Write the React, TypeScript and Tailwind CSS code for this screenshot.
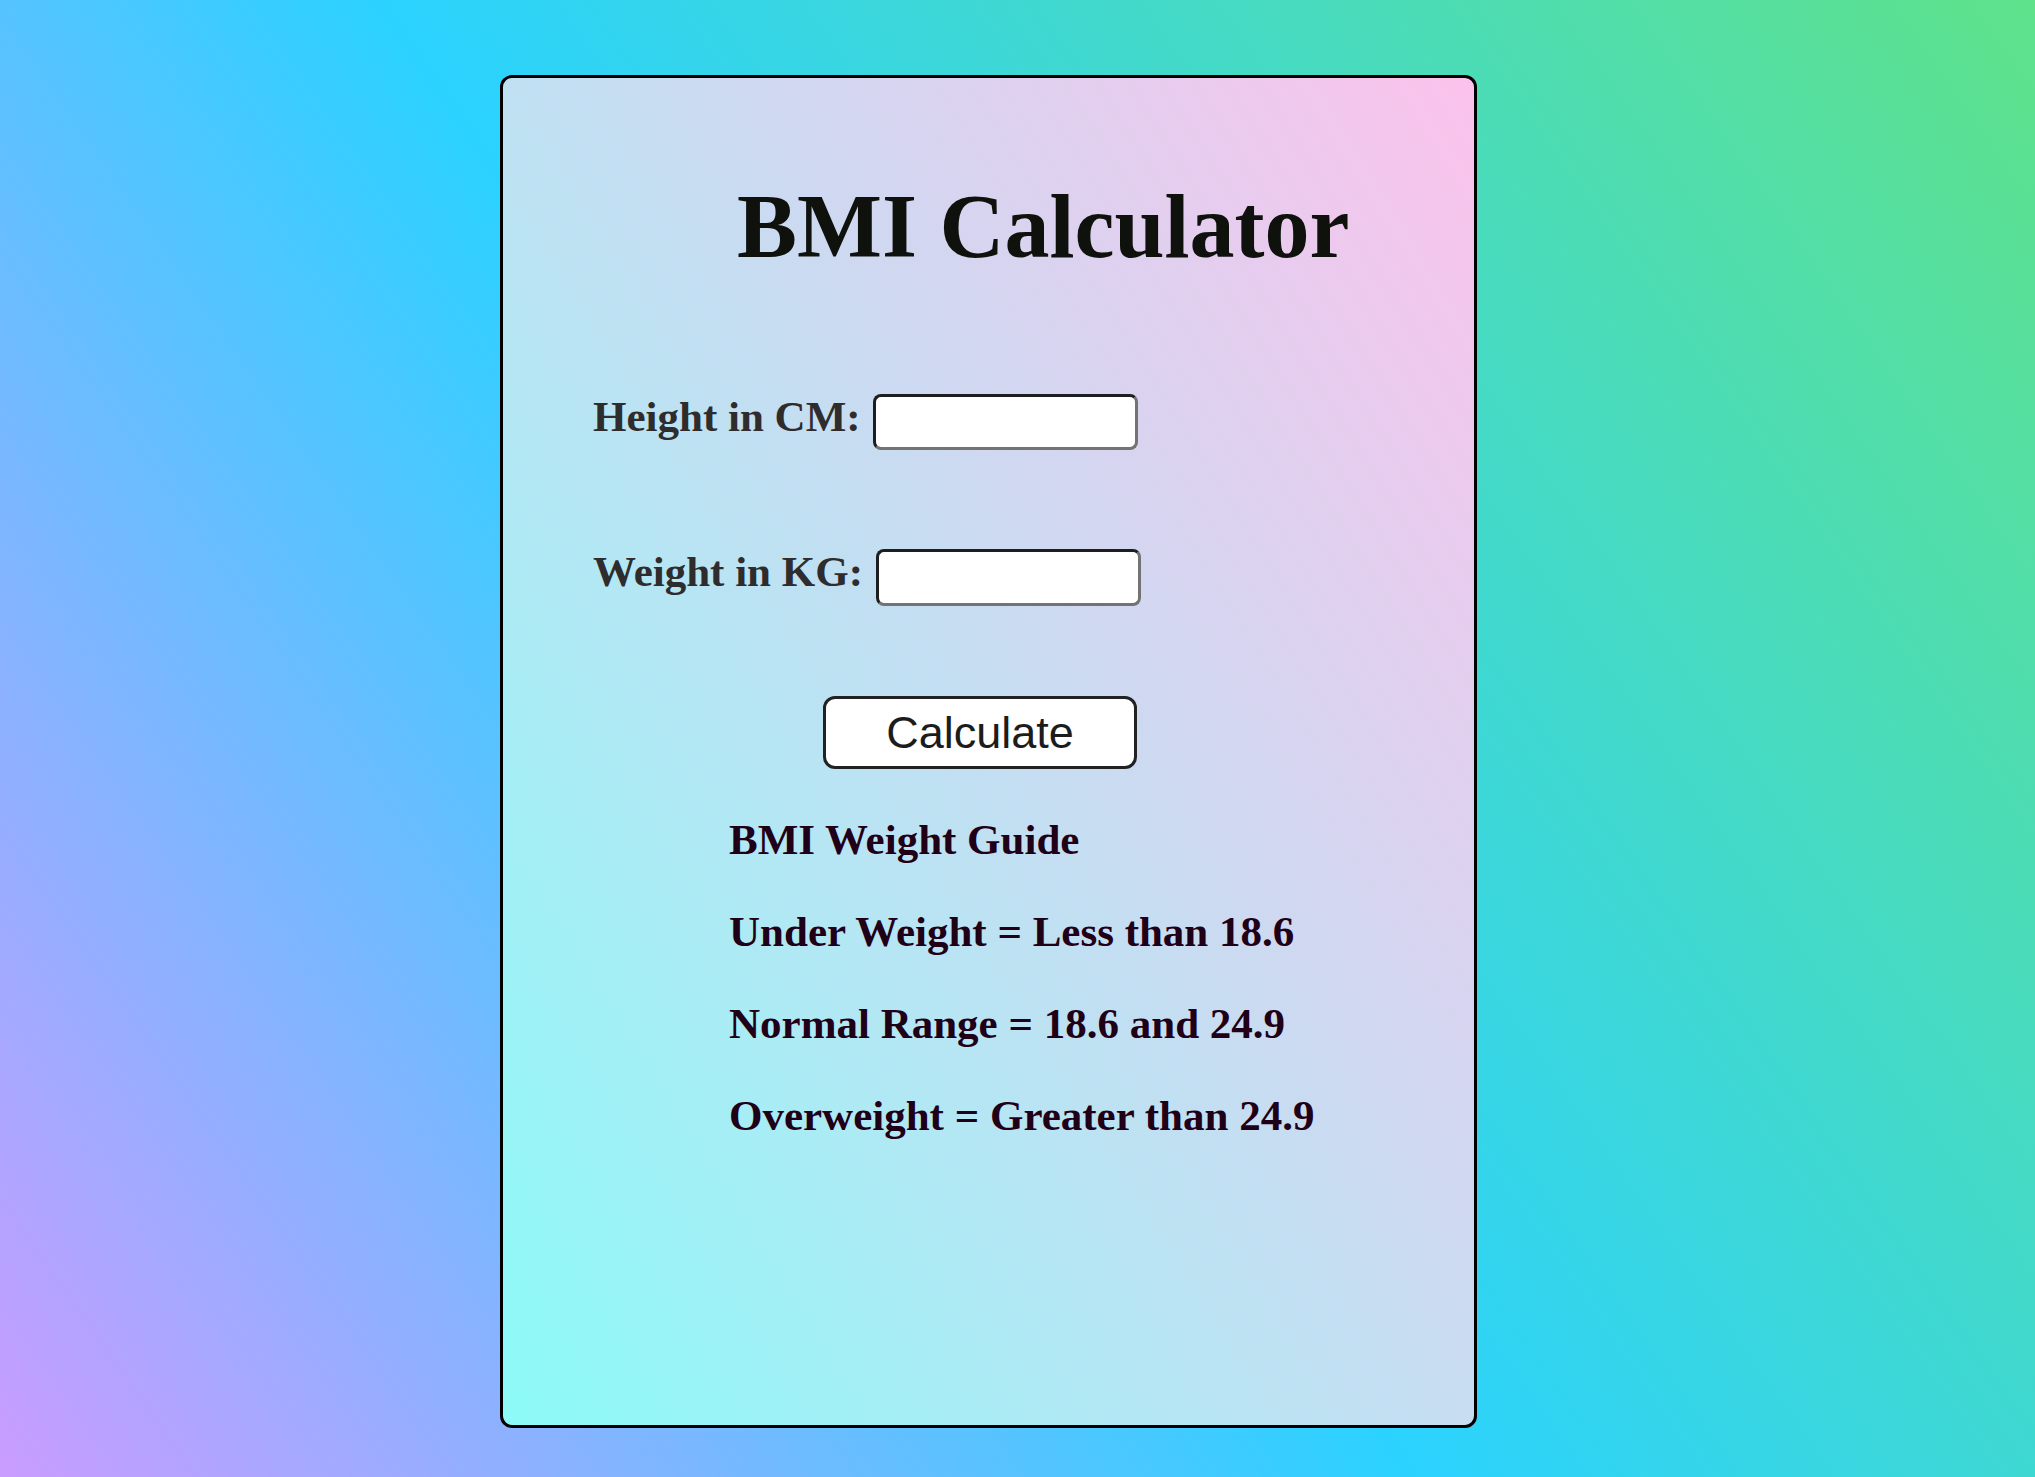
import React from "react";

export default function App() {
  const serif = { fontFamily: '"Liberation Serif", "Times New Roman", serif' };
  return (
    <div className="w-full h-[1477px] overflow-hidden bg-[linear-gradient(55deg,#c99cff_0%,#2bd2ff_46%,#5fe28a_100%)] pt-[75px]">
      <div
        className="ml-[500px] w-[977px] h-[1353px] border-[3px] border-black rounded-[12px] bg-[linear-gradient(58deg,#8cfbf8_0%,#fbc2ec_100%)] flex flex-col"
        style={serif}
      >
        <h1 className="mt-[104px] pl-[234px] text-[90px] leading-none font-bold text-[#0f110c] whitespace-nowrap">
          BMI Calculator
        </h1>

        <div className="mt-[122px] pl-[90px] flex items-center gap-[12px] h-[56px]">
          <label className="mb-[12px] text-[43px] leading-none font-bold text-[#2e2c2c] whitespace-nowrap">
            Height in CM:
          </label>
          <input
            type="text"
            className="w-[265px] h-[56px] bg-white rounded-[8px] border-[3px] border-t-[#1e1e1e] border-l-[#1e1e1e] border-b-[#737373] border-r-[#737373] outline-none"
          />
        </div>

        <div className="mt-[99px] pl-[90px] flex items-center gap-[13px] h-[56px]">
          <label className="mb-[12px] text-[43px] leading-none font-bold text-[#2e2c2c] whitespace-nowrap">
            Weight in KG:
          </label>
          <input
            type="text"
            className="w-[265px] h-[57px] bg-white rounded-[8px] border-[3px] border-t-[#1e1e1e] border-l-[#1e1e1e] border-b-[#737373] border-r-[#737373] outline-none"
          />
        </div>

        <div className="mt-[91px] pl-[320px]">
          <button
            className="w-[314px] h-[73px] bg-white border-[3px] border-[#222222] rounded-[12px] text-[45px] leading-none text-[#1c1c1c]"
            style={{ fontFamily: '"Liberation Sans", Arial, sans-serif' }}
          >
            Calculate
          </button>
        </div>

        <div className="mt-[49px] pl-[226px] flex flex-col gap-[49px] text-[43px] leading-none font-bold text-[#1f0017]">
          <p className="whitespace-nowrap">BMI Weight Guide</p>
          <p className="whitespace-nowrap">Under Weight = Less than 18.6</p>
          <p className="whitespace-nowrap">Normal Range = 18.6 and 24.9</p>
          <p className="whitespace-nowrap">Overweight = Greater than 24.9</p>
        </div>
      </div>
    </div>
  );
}
